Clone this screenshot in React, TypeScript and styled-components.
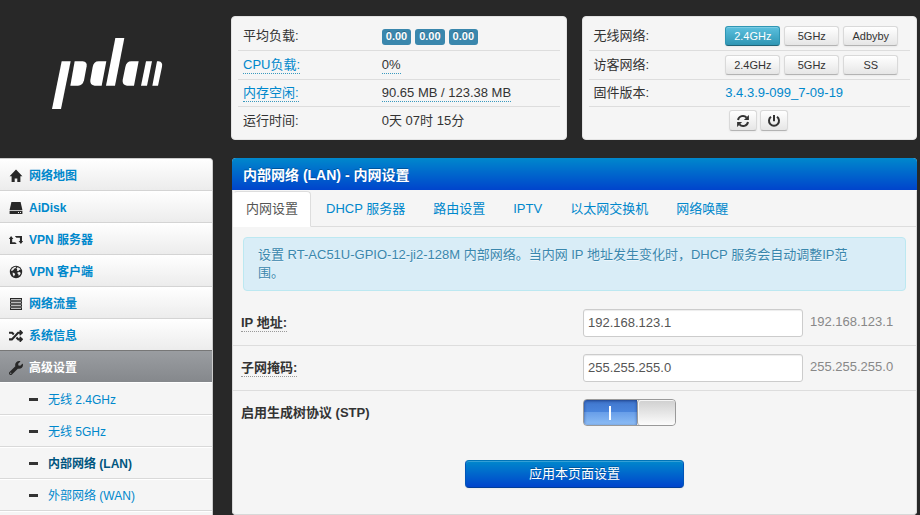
import React, { useState } from 'react';
import styled, { createGlobalStyle, css } from 'styled-components';
import { FaRandom, FaWrench } from 'react-icons/fa';

const GlobalStyle = createGlobalStyle`
  *, *::before, *::after { box-sizing: border-box; }
  body {
    margin: 0;
    background: #282828;
    color: #333;
    font: 13px/18px "Liberation Sans", "Noto Sans CJK SC", sans-serif;
  }
  button, input { font-family: inherit; margin: 0; }
  a { color: #08c; text-decoration: none; }
`;

const Page = styled.div`
  display: grid;
  grid-template-columns: 213px minmax(0, 1fr);
  grid-template-rows: 142px 1fr;
  column-gap: 18px;
  min-height: 100vh;
  padding: 16px 3px 0 0;
`;

const LogoArea = styled.header`
  padding: 20px 0 0 50px;
`;

const StatusArea = styled.section`
  display: grid;
  grid-template-columns: 1fr 1fr;
  gap: 15px;
  align-items: start;
`;

const StatusPanel = styled.dl`
  margin: 0;
  padding: 5px 6px;
  background: #f5f5f5;
  border: 1px solid #e3e3e3;
  border-radius: 4px;
`;

const StatusRow = styled.div<{ $tall?: boolean; $split: string }>`
  display: grid;
  grid-template-columns: ${(p) => p.$split};
  align-items: center;
  height: ${(p) => (p.$tall ? 29 : 27)}px;
  padding-left: 5px;
  border-bottom: 1px solid #ddd;
  &:last-child { border-bottom: 0; }
`;

const Term = styled.dt`
  display: flex;
`;

const Value = styled.dd<{ $inset?: boolean }>`
  display: flex;
  gap: ${(p) => (p.$inset ? 3 : 4)}px;
  margin: 0;
  padding-left: ${(p) => (p.$inset ? 4 : 0)}px;
  white-space: nowrap;
`;

const dotted = css`
  line-height: 17px;
  border-bottom: 1px dotted #3a9abf;
`;

const HintLink = styled.a`
  ${dotted}
`;

const HintValue = styled.span`
  ${dotted}
`;

const Badge = styled.span`
  height: 16px;
  margin-top: 2px;
  padding: 0 4px;
  border-radius: 3px;
  background: #3a87ad;
  color: #fff;
  font-size: 11px;
  font-weight: bold;
  line-height: 14px;
  text-shadow: 0 -1px 0 rgba(0, 0, 0, 0.25);
`;

const MiniButton = styled.button<{ $active?: boolean; $icon?: boolean }>`
  display: flex;
  align-items: center;
  justify-content: center;
  width: ${(p) => (p.$icon ? 28 : 55)}px;
  height: ${(p) => (p.$icon ? 21 : 20)}px;
  padding: 0;
  border: 1px solid;
  border-color: ${(p) => (p.$active ? '#2f96b4 #2f96b4 #1f6377' : '#d9d9d9 #d9d9d9 #b3b3b3')};
  border-radius: 3px;
  background: ${(p) =>
    p.$active ? 'linear-gradient(#5bc0de, #2f96b4)' : 'linear-gradient(#fff, #e6e6e6)'};
  box-shadow: inset 0 1px 0 rgba(255, 255, 255, 0.2), 0 1px 2px rgba(0, 0, 0, 0.05);
  color: ${(p) => (p.$active ? '#fff' : '#333')};
  font-size: 11px;
  line-height: 16px;
`;

const Sidebar = styled.nav`
  overflow: hidden;
  border: 1px solid #ccc;
  border-width: 1px 1px 0 0;
  border-radius: 0 4px 0 0;
  background: #f5f5f5;
`;

const MenuList = styled.ul`
  margin: 0;
  padding: 0;
  list-style: none;
`;

const MenuLink = styled.a<{ $active?: boolean }>`
  display: flex;
  align-items: center;
  gap: 6px;
  height: 32px;
  padding: 2px 0 0 9px;
  border-bottom: 1px solid ${(p) => (p.$active ? '#fff' : '#d4d4d4')};
  background: ${(p) =>
    p.$active ? 'linear-gradient(#9a9da1, #85888c)' : 'linear-gradient(#fff, #ececec)'};
  box-shadow: ${(p) => (p.$active ? '0 -1px 0 #777' : 'none')};
  color: ${(p) => (p.$active ? '#fff' : '#08c')};
  font-size: 12px;
  font-weight: bold;
  svg { color: #282828; flex: none; }
`;

const SubLink = styled.a<{ $current?: boolean }>`
  display: flex;
  align-items: center;
  gap: 10px;
  height: 32px;
  padding: 2px 0 0 29px;
  border-bottom: 1px solid #d9d9d9;
  box-shadow: 0 1px 0 #fff;
  font-size: 12px;
  font-weight: ${(p) => (p.$current ? 'bold' : 'normal')};
  color: ${(p) => (p.$current ? '#005580' : '#08c')};
  &::before {
    content: '';
    width: 9px;
    height: 3px;
    background: #333;
  }
`;

const MainPanel = styled.main`
  display: flex;
  flex-direction: column;
  margin-left: 1px;
  border-radius: 4px;
  background: #f5f5f5;
  overflow: hidden;
`;

const Title = styled.h1`
  margin: 0;
  padding: 8px 11px 6px;
  background: linear-gradient(#08c, #04c);
  color: #fff;
  font-size: 14px;
  line-height: 18px;
  text-shadow: 0 -1px 0 rgba(0, 0, 0, 0.25);
`;

const PanelBody = styled.div`
  flex: 1;
  border: 1px solid #d8d8d8;
  border-top-color: #f5f5f5;
  border-radius: 0 0 4px 4px;
`;

const Tabs = styled.nav`
  display: flex;
  gap: 2px;
  border-bottom: 1px solid #ddd;
`;

const Tab = styled.a<{ $active?: boolean }>`
  margin-bottom: -1px;
  padding: 8px 12px;
  border: 1px solid transparent;
  border-radius: 4px 4px 0 0;
  white-space: nowrap;
  ${(p) =>
    p.$active &&
    css`
      border-color: #ddd #ddd #fff #fff;
      background: #fff;
      color: #555;
    `}
`;

const Alert = styled.p`
  margin: 10px;
  padding: 8px 35px 8px 14px;
  border: 1px solid #bce8f1;
  border-radius: 4px;
  background: #d9edf7;
  color: #3a87ad;
  text-shadow: 0 1px 0 rgba(255, 255, 255, 0.5);
`;

const FormRow = styled.div<{ $last?: boolean }>`
  display: grid;
  grid-template-columns: 350fr 333fr;
  align-items: center;
  height: ${(p) => (p.$last ? 43 : 45)}px;
  border-bottom: ${(p) => (p.$last ? 0 : 1)}px solid #ddd;
`;

const FieldLabel = styled.label<{ $hint?: boolean }>`
  justify-self: start;
  margin-left: 8px;
  font-weight: bold;
  line-height: 17px;
  border-bottom: 1px dotted ${(p) => (p.$hint ? '#999' : 'transparent')};
`;

const Control = styled.div`
  display: flex;
  align-items: center;
  gap: 7px;
`;

const TextInput = styled.input`
  width: 220px;
  height: 28px;
  padding: 3px 4px 5px;
  border: 1px solid #ccc;
  border-radius: 3px;
  background: #fff;
  box-shadow: inset 0 1px 1px rgba(0, 0, 0, 0.075);
  color: #555;
  font-size: 13px;
`;

const Note = styled.span`
  padding-bottom: 3px;
  color: #888;
`;

const Toggle = styled.input`
  appearance: none;
  position: relative;
  width: 93px;
  height: 27px;
  border: 1px solid #999;
  border-radius: 4px;
  background: #eee;
  overflow: hidden;
  &::before {
    content: '';
    position: absolute;
    inset: 0 38px 0 0;
    background:
      linear-gradient(#fff, #fff) 25px 6px / 2px 14px no-repeat,
      linear-gradient(#3f75cc, #4b86dd 50%, #699fe9 50%, #8dbdf5);
    box-shadow: inset 0 1px 3px rgba(0, 20, 80, 0.55);
  }
  &::after {
    content: '';
    position: absolute;
    inset: 0 0 0 53px;
    border-left: 1px solid #999;
    border-radius: 3px;
    background: linear-gradient(#cfcfcf, #fcfcfc);
    box-shadow: inset 1px 1px 0 #f5f5f5;
  }
  &:not(:checked)::before { visibility: hidden; }
  &:not(:checked)::after { inset: 0 53px 0 0; }
`;

const Actions = styled.div`
  display: flex;
  justify-content: center;
  padding: 26px 0;
`;

const ApplyButton = styled.button`
  width: 32%;
  height: 28px;
  border: 1px solid;
  border-color: #0074b8 #0055b8 #003d99;
  border-radius: 4px;
  background: linear-gradient(#08c, #04c);
  box-shadow: inset 0 1px 0 rgba(255, 255, 255, 0.2), 0 1px 2px rgba(0, 0, 0, 0.05);
  color: #fff;
  font-size: 13px;
  line-height: 18px;
  text-shadow: 0 -1px 0 rgba(0, 0, 0, 0.25);
`;

const Logo = () => (
  <svg width="114" height="75" viewBox="150 108 342 225" fill="#fff" role="img" aria-label="pdcn">
    <path d="M185 184H212L183 327H156Z" />
    <path d="M224 184H248Q262 186 260 199L252 241Q248 257 234 257H211Z" />
    <path d="M319 184L305 257H284Q269 255 271 240L278 201Q281 184 296 184Z" />
    <path d="M346 114H373L345 257H318Z" />
    <path d="M416 184L402 257H381Q366 255 368 240L376 201Q379 184 394 184Z" />
    <path d="M438 184H456L441 257H423Z" />
    <path d="M471 184H476Q489 186 486 200L474 257H457Z" />
  </svg>
);

const icon = { width: 14, height: 14, viewBox: '0 0 14 14', fill: 'currentColor', 'aria-hidden': true };

const HomeIcon = () => (
  <svg {...icon}>
    <path d="M7 .6 13.4 7.2H11.4V13H8.3V9.4H5.7V13H2.6V7.2H.6Z" />
  </svg>
);

const DiskIcon = () => (
  <svg {...icon}>
    <path d="M2.4 1H11.6L13.4 9H.6Z" />
    <path fillRule="evenodd" d="M.6 9.8H13.4V13H.6ZM9 11V12H10V11ZM11 11V12H12V11Z" />
  </svg>
);

const ExchangeIcon = () => (
  <svg {...icon}>
    <path d="M2.1 3 4.4 6H3.2V9.2H6.2L7.8 11H1V6H-.2Z" />
    <path d="M5.8 3H13V8H14.2L11.9 11 9.6 8H10.9V4.8H7.4Z" />
  </svg>
);

const GlobeIcon = () => (
  <svg {...icon}>
    <circle cx="7" cy="7" r="6.2" />
    <path
      fill="#eee"
      d="M5.2 2 7.3 1.8 6.5 3.2 5.4 3.6 4.6 4.8 3 6 2 5.6 2.8 3.8ZM8.3 2.2 10.4 3 11.7 4.6 10.2 5 9.3 6.2 7.8 5.6 8.2 4.2 7.4 3.4ZM8.7 7.2 10.6 6.9 11.8 8 10.8 10 9.6 10.7 9.3 9.1 8.3 8.4ZM3.6 7.6 5.2 8 6.2 9.2 5.4 10.4 5 11.6 3.9 10Z"
    />
  </svg>
);

const TrafficIcon = () => (
  <svg {...icon}>
    {[1, 4, 7, 10].map((y) => (
      <g key={y}>
        <rect x="1" y={y} width="12" height="3" />
        <rect x="2" y={y + 1} width="10" height="1" fill="#bbb" />
      </g>
    ))}
    <path stroke="#e4e4e4" strokeWidth=".5" d="M1 4H13M1 7H13M1 10H13" />
  </svg>
);

const ShuffleIcon = () => <FaRandom size={14} />;
const WrenchIcon = () => <FaWrench size={14} />;

const RefreshIcon = () => (
  <svg {...icon}>
    <path fill="none" stroke="currentColor" strokeWidth="2" d="M2 6A5 5 0 0 1 10.6 3.6M12 8A5 5 0 0 1 3.4 10.4" />
    <path d="M12.9 1V6H7.9ZM1.1 13V8H6.1Z" />
  </svg>
);

const PowerIcon = () => (
  <svg {...icon}>
    <path fill="none" stroke="currentColor" strokeWidth="2" d="M4 2.7A5 5 0 1 0 10 2.7M7 1V7.2" />
  </svg>
);

const menu = [
  { label: '网络地图', Icon: HomeIcon },
  { label: 'AiDisk', Icon: DiskIcon },
  { label: 'VPN 服务器', Icon: ExchangeIcon },
  { label: 'VPN 客户端', Icon: GlobeIcon },
  { label: '网络流量', Icon: TrafficIcon },
  { label: '系统信息', Icon: ShuffleIcon },
  { label: '高级设置', Icon: WrenchIcon, active: true },
];

const subMenu = ['无线 2.4GHz', '无线 5GHz', '内部网络 (LAN)', '外部网络 (WAN)'];
const tabs = ['内网设置', 'DHCP 服务器', '路由设置', 'IPTV', '以太网交换机', '网络唤醒'];

const LEFT = '139fr 178fr';
const RIGHT = '132fr 185fr';

export default function App() {
  const [ip, setIp] = useState('192.168.123.1');
  const [mask, setMask] = useState('255.255.255.0');
  const [stp, setStp] = useState(true);

  return (
    <>
      <GlobalStyle />
      <Page>
        <LogoArea>
          <Logo />
        </LogoArea>

        <StatusArea>
          <StatusPanel>
            <StatusRow $tall $split={LEFT}>
              <Term>平均负载:</Term>
              <Value>
                <Badge>0.00</Badge>
                <Badge>0.00</Badge>
                <Badge>0.00</Badge>
              </Value>
            </StatusRow>
            <StatusRow $tall $split={LEFT}>
              <Term><HintLink href="#cpu">CPU负载:</HintLink></Term>
              <Value><HintValue>0%</HintValue></Value>
            </StatusRow>
            <StatusRow $split={LEFT}>
              <Term><HintLink href="#memory">内存空闲:</HintLink></Term>
              <Value><HintValue>90.65 MB / 123.38 MB</HintValue></Value>
            </StatusRow>
            <StatusRow $split={LEFT}>
              <Term>运行时间:</Term>
              <Value>0天 07时 15分</Value>
            </StatusRow>
          </StatusPanel>

          <StatusPanel>
            <StatusRow $tall $split={RIGHT}>
              <Term>无线网络:</Term>
              <Value>
                <MiniButton $active>2.4GHz</MiniButton>
                <MiniButton>5GHz</MiniButton>
                <MiniButton>Adbyby</MiniButton>
              </Value>
            </StatusRow>
            <StatusRow $tall $split={RIGHT}>
              <Term>访客网络:</Term>
              <Value>
                <MiniButton>2.4GHz</MiniButton>
                <MiniButton>5GHz</MiniButton>
                <MiniButton>SS</MiniButton>
              </Value>
            </StatusRow>
            <StatusRow $split={RIGHT}>
              <Term>固件版本:</Term>
              <Value><a href="#firmware">3.4.3.9-099_7-09-19</a></Value>
            </StatusRow>
            <StatusRow $split={RIGHT}>
              <Term />
              <Value $inset>
                <MiniButton $icon aria-label="刷新"><RefreshIcon /></MiniButton>
                <MiniButton $icon aria-label="电源"><PowerIcon /></MiniButton>
              </Value>
            </StatusRow>
          </StatusPanel>
        </StatusArea>

        <Sidebar>
          <MenuList>
            {menu.map(({ label, Icon, active }) => (
              <li key={label}>
                <MenuLink href="#menu" $active={active}>
                  <Icon />
                  {label}
                </MenuLink>
              </li>
            ))}
            {subMenu.map((label, i) => (
              <li key={label}>
                <SubLink href="#submenu" $current={i === 2}>{label}</SubLink>
              </li>
            ))}
          </MenuList>
        </Sidebar>

        <MainPanel>
          <Title>内部网络 (LAN) - 内网设置</Title>
          <PanelBody>
            <Tabs>
              {tabs.map((label, i) => (
                <Tab key={label} href="#tab" $active={i === 0}>{label}</Tab>
              ))}
            </Tabs>
            <Alert>
              设置 RT-AC51U-GPIO-12-ji2-128M 内部网络。当内网 IP 地址发生变化时，DHCP 服务会自动调整IP范围。
            </Alert>
            <form onSubmit={(e) => e.preventDefault()}>
              <FormRow>
                <FieldLabel $hint htmlFor="ip">IP 地址:</FieldLabel>
                <Control>
                  <TextInput id="ip" value={ip} onChange={(e) => setIp(e.target.value)} />
                  <Note>192.168.123.1</Note>
                </Control>
              </FormRow>
              <FormRow>
                <FieldLabel $hint htmlFor="mask">子网掩码:</FieldLabel>
                <Control>
                  <TextInput id="mask" value={mask} onChange={(e) => setMask(e.target.value)} />
                  <Note>255.255.255.0</Note>
                </Control>
              </FormRow>
              <FormRow $last>
                <FieldLabel htmlFor="stp">启用生成树协议 (STP)</FieldLabel>
                <Control>
                  <Toggle id="stp" type="checkbox" checked={stp} onChange={(e) => setStp(e.target.checked)} />
                </Control>
              </FormRow>
              <Actions>
                <ApplyButton type="submit">应用本页面设置</ApplyButton>
              </Actions>
            </form>
          </PanelBody>
        </MainPanel>
      </Page>
    </>
  );
}
